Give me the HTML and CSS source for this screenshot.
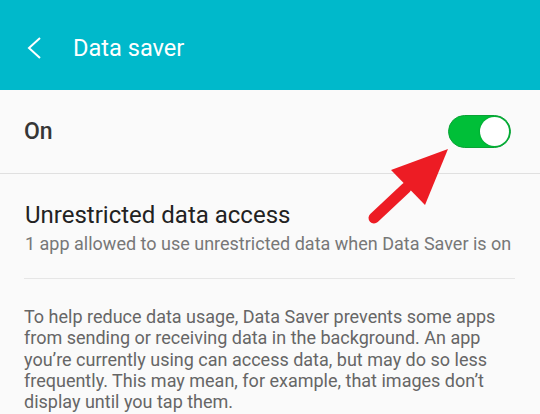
FILE: index.html
```html
<!DOCTYPE html>
<html lang="en">
<head>
    <meta charset="UTF-8">
    <meta name="viewport" content="width=device-width, initial-scale=1.0">
    <title>Data saver</title>
    <link rel="stylesheet" href="styles.css">
</head>
<body>
    <div id="screen">
        <header class="app-bar">
            <svg class="back-icon" width="16" height="22" viewBox="0 0 16 22">
                <polyline points="13,1 2,11 13,21" fill="none" stroke="#fff" stroke-width="2"/>
            </svg>
            <h1 class="app-title">Data saver</h1>
        </header>

        <div class="switch-row">
            <span class="switch-label">On</span>
            <div class="toggle on">
                <div class="knob"></div>
            </div>
        </div>

        <div class="pref-item">
            <div class="pref-title">Unrestricted data access</div>
            <div class="pref-summary">1 app allowed to use unrestricted data when Data Saver is on</div>
        </div>

        <p class="footer-text">To help reduce data usage, Data Saver prevents some apps from sending or receiving data in the background. An app you’re currently using can access data, but may do so less frequently. This may mean, for example, that images don’t display until you tap them.</p>

        <!-- annotation arrow drawn over the screenshot -->
        <svg class="pointer-arrow" width="540" height="414" viewBox="0 0 540 414">
            <line x1="406" y1="188" x2="374" y2="218" stroke="#ED1C24" stroke-width="11" stroke-linecap="round"/>
            <polygon points="448,149 391,170 425,205" fill="#ED1C24"/>
        </svg>
    </div>
</body>
</html>
```

FILE: styles.css
```css
body {
    margin: 0;
    background-color: #fafafa;
    font-family: Roboto, "Noto Sans", sans-serif;
    overflow: hidden;
}

#screen {
    position: relative;
    width: 540px;
    height: 414px;
    overflow: hidden;
}

.app-bar {
    height: 90px;
    box-sizing: border-box;
    padding: 5px 0 0 27px;
    background-color: #00b9cb;
    display: flex;
    align-items: center;
    gap: 30px;
}

.back-icon {
    flex-shrink: 0;
}

.app-title {
    margin: 0;
    font-size: 23.6px;
    font-weight: normal;
    line-height: 28px;
    color: #fff;
}

.switch-row {
    height: 83px;
    padding: 0 29px 0 24px;
    display: flex;
    align-items: center;
    justify-content: space-between;
    border-bottom: 1px solid #e0e0e0;
}

.switch-label {
    font-size: 23px;
    font-weight: 500;
    line-height: 28px;
    color: #363636;
    padding-top: 1px;
}

.toggle {
    width: 63px;
    height: 33px;
    box-sizing: border-box;
    border-radius: 17px;
    border: 1px solid #0aa336;
    background-color: #00bf38;
    position: relative;
}

.knob {
    position: absolute;
    top: 1px;
    right: 1px;
    width: 29px;
    height: 29px;
    border-radius: 50%;
    background-color: #fff;
    box-shadow: 0 0 2px rgba(0,0,0,0.25);
}

.pref-item {
    margin: 0 25px 0 24px;
    padding: 27px 0 23px 1px;
    border-bottom: 1px solid #e6e6e6;
}

.pref-title {
    font-size: 24px;
    line-height: 28px;
    color: #222;
}

.pref-summary {
    margin-top: 4px;
    font-size: 18px;
    line-height: 22px;
    color: #777;
    white-space: nowrap;
}

.footer-text {
    margin: 27px 25px 0 24px;
    font-size: 18px;
    line-height: 21.3px;
    color: #666;
}

.pointer-arrow {
    position: absolute;
    top: 0;
    left: 0;
    pointer-events: none;
}
```
